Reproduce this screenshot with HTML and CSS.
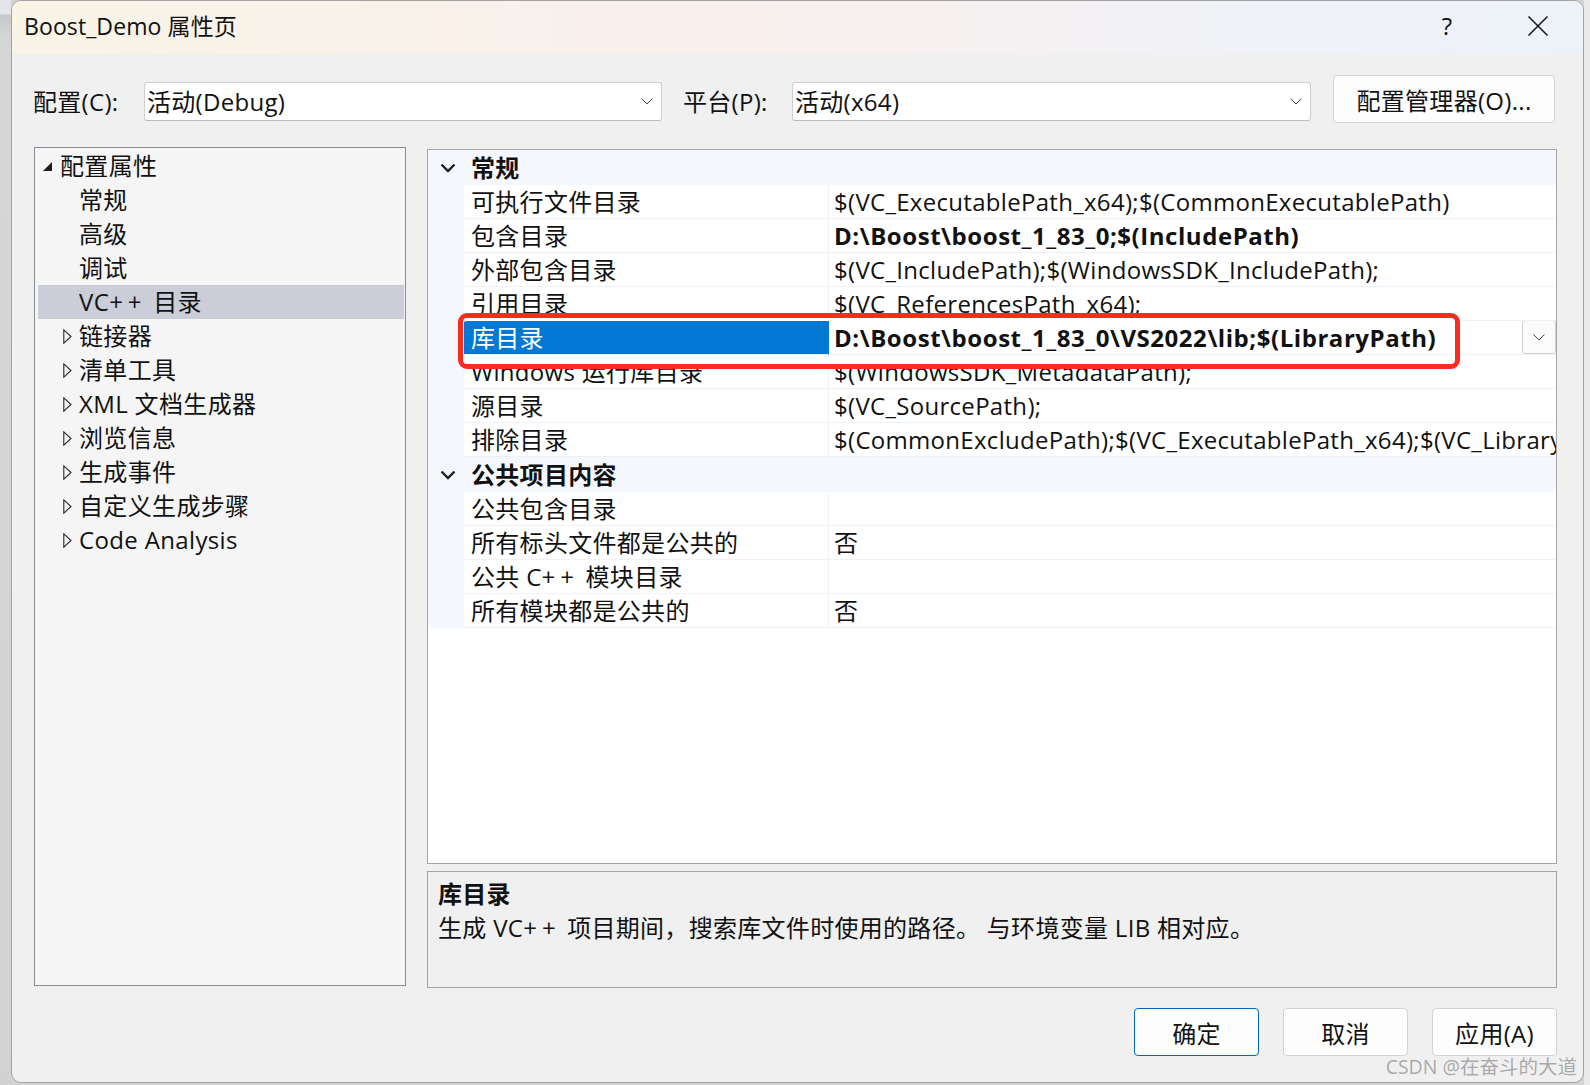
FILE: index.html
```html
<!DOCTYPE html>
<html lang="zh-CN">
<head>
<meta charset="utf-8">
<title>Boost_Demo 属性页</title>
<link rel="stylesheet" href="styles.css">
</head>
<body>
<div class="screen">
  <div class="side-left"></div>
  <div class="dialog">
    <div class="titlebar">
      <span class="title">Boost_Demo 属性页</span>
      <span class="help">?</span>
      <svg class="close" width="22" height="22" viewBox="0 0 22 22"><path d="M1.5 1.5 L20.5 20.5 M20.5 1.5 L1.5 20.5" stroke="#1a1a1a" stroke-width="1.6" fill="none"/></svg>
    </div>
    <div class="content">
      <div class="toolbar">
        <span class="label label-config">配置(C):</span>
        <div class="combo combo-config"><span>活动(Debug)</span><svg width="12" height="7" viewBox="0 0 12 7"><path d="M0.5 0.5 L6 6 L11.5 0.5" stroke="#444" stroke-width="1" fill="none"/></svg></div>
        <span class="label label-platform">平台(P):</span>
        <div class="combo combo-platform"><span>活动(x64)</span><svg width="12" height="7" viewBox="0 0 12 7"><path d="M0.5 0.5 L6 6 L11.5 0.5" stroke="#444" stroke-width="1" fill="none"/></svg></div>
        <div class="btn btn-manager">配置管理器(O)...</div>
      </div>
      <div class="main">
        <div class="tree">
          <div class="node lvl1"><span class="ico"><svg width="9" height="9" viewBox="0 0 9 9"><polygon points="9,0 9,9 0,9" fill="#1e1e1e"/></svg></span><span>配置属性</span></div>
          <div class="node lvl2"><span class="ico"></span><span>常规</span></div>
          <div class="node lvl2"><span class="ico"></span><span>高级</span></div>
          <div class="node lvl2"><span class="ico"></span><span>调试</span></div>
          <div class="node lvl2 selected"><span class="ico"></span><span>VC<span class="pp">++</span> 目录</span></div>
          <div class="node lvl2"><span class="ico"><svg width="9" height="15" viewBox="0 0 9 15"><polygon points="0.8,0.8 8,7.5 0.8,14.2" fill="none" stroke="#2a2a2a" stroke-width="1.1"/></svg></span><span>链接器</span></div>
          <div class="node lvl2"><span class="ico"><svg width="9" height="15" viewBox="0 0 9 15"><polygon points="0.8,0.8 8,7.5 0.8,14.2" fill="none" stroke="#2a2a2a" stroke-width="1.1"/></svg></span><span>清单工具</span></div>
          <div class="node lvl2"><span class="ico"><svg width="9" height="15" viewBox="0 0 9 15"><polygon points="0.8,0.8 8,7.5 0.8,14.2" fill="none" stroke="#2a2a2a" stroke-width="1.1"/></svg></span><span>XML 文档生成器</span></div>
          <div class="node lvl2"><span class="ico"><svg width="9" height="15" viewBox="0 0 9 15"><polygon points="0.8,0.8 8,7.5 0.8,14.2" fill="none" stroke="#2a2a2a" stroke-width="1.1"/></svg></span><span>浏览信息</span></div>
          <div class="node lvl2"><span class="ico"><svg width="9" height="15" viewBox="0 0 9 15"><polygon points="0.8,0.8 8,7.5 0.8,14.2" fill="none" stroke="#2a2a2a" stroke-width="1.1"/></svg></span><span>生成事件</span></div>
          <div class="node lvl2"><span class="ico"><svg width="9" height="15" viewBox="0 0 9 15"><polygon points="0.8,0.8 8,7.5 0.8,14.2" fill="none" stroke="#2a2a2a" stroke-width="1.1"/></svg></span><span>自定义生成步骤</span></div>
          <div class="node lvl2"><span class="ico"><svg width="9" height="15" viewBox="0 0 9 15"><polygon points="0.8,0.8 8,7.5 0.8,14.2" fill="none" stroke="#2a2a2a" stroke-width="1.1"/></svg></span><span>Code Analysis</span></div>
        </div>
        <div class="right">
          <div class="grid">
            <div class="section"><span class="chev"><svg width="16" height="10" viewBox="0 0 16 10"><path d="M1.5 1.5 L8 8 L14.5 1.5" stroke="#1e1e1e" stroke-width="2.4" fill="none"/></svg></span><span>常规</span></div>
            <div class="prop"><div class="gutter"></div><div class="name">可执行文件目录</div><div class="value">$(VC_ExecutablePath_x64);$(CommonExecutablePath)</div></div>
            <div class="prop"><div class="gutter"></div><div class="name">包含目录</div><div class="value bold">D:\Boost\boost_1_83_0;$(IncludePath)</div></div>
            <div class="prop"><div class="gutter"></div><div class="name">外部包含目录</div><div class="value">$(VC_IncludePath);$(WindowsSDK_IncludePath);</div></div>
            <div class="prop"><div class="gutter"></div><div class="name">引用目录</div><div class="value">$(VC_ReferencesPath_x64);</div></div>
            <div class="prop sel"><div class="gutter"></div><div class="name">库目录</div><div class="value bold">D:\Boost\boost_1_83_0\VS2022\lib;$(LibraryPath)<span class="dd"><svg width="12" height="7" viewBox="0 0 12 7"><path d="M0.5 0.5 L6 6 L11.5 0.5" stroke="#444" stroke-width="1" fill="none"/></svg></span></div></div>
            <div class="prop"><div class="gutter"></div><div class="name">Windows 运行库目录</div><div class="value">$(WindowsSDK_MetadataPath);</div></div>
            <div class="prop"><div class="gutter"></div><div class="name">源目录</div><div class="value">$(VC_SourcePath);</div></div>
            <div class="prop"><div class="gutter"></div><div class="name">排除目录</div><div class="value">$(CommonExcludePath);$(VC_ExecutablePath_x64);$(VC_Library</div></div>
            <div class="section"><span class="chev"><svg width="16" height="10" viewBox="0 0 16 10"><path d="M1.5 1.5 L8 8 L14.5 1.5" stroke="#1e1e1e" stroke-width="2.4" fill="none"/></svg></span><span>公共项目内容</span></div>
            <div class="prop"><div class="gutter"></div><div class="name">公共包含目录</div><div class="value"></div></div>
            <div class="prop"><div class="gutter"></div><div class="name">所有标头文件都是公共的</div><div class="value">否</div></div>
            <div class="prop"><div class="gutter"></div><div class="name">公共 C<span class="pp">++</span> 模块目录</div><div class="value"></div></div>
            <div class="prop"><div class="gutter"></div><div class="name">所有模块都是公共的</div><div class="value">否</div></div>
            <div class="highlight"></div>
          </div>
          <div class="desc">
            <div class="desc-title">库目录</div>
            <div class="desc-text">生成 VC<span class="pp">++</span> 项目期间，搜索库文件时使用的路径。 与环境变量 LIB 相对应。</div>
          </div>
        </div>
      </div>
      <div class="buttons">
        <div class="btn btn-dlg btn-ok">确定</div>
        <div class="btn btn-dlg">取消</div>
        <div class="btn btn-dlg">应用(A)</div>
      </div>
    </div>
    <div class="watermark">CSDN @在奋斗的大道</div>
  </div>
  <div class="side-right"></div>
</div>
</body>
</html>
```
FILE: styles.css
```css
* { box-sizing: border-box; }
html, body { margin: 0; padding: 0; }
body {
  width: 1590px;
  height: 1085px;
  overflow: hidden;
  font-family: "Open Sans", "Noto Sans CJK SC", sans-serif;
  font-size: 24px;
  color: #111;
  background: #d3d3d3;
}
.screen { display: flex; width: 1590px; height: 1085px; }
.side-left {
  width: 11px;
  flex: none;
  background: linear-gradient(180deg, #e4e4ea 0, #e4e4ea 14px, #c9c9cc 15px, #d6d6d6 40px, #d2d2d2 100%);
}
.side-right {
  flex: 1;
  background: #e9e9e9;
}
.dialog {
  position: relative;
  width: 1573px;
  height: 1083px;
  flex: none;
  background: #f0f0f0;
  border: 1px solid #a3a3a3;
  border-radius: 10px;
  overflow: hidden;
  display: flex;
  flex-direction: column;
}
.titlebar {
  height: 53px;
  flex: none;
  display: flex;
  align-items: center;
  padding-left: 12px;
  background: linear-gradient(90deg, #f8f4e6 0%, #f9f0ec 40%, #f8f0ef 55%, #f0f2f7 78%, #edf2f9 100%);
}
.title { font-size: 23px; color: #111; line-height: 30px; margin-top: -3px; letter-spacing: 0.1px; }
.help { margin-left: auto; font-size: 24px; font-weight: 400; margin-right: 75px; margin-top: -4px; color: #111; }
.close { margin-right: 34px; margin-top: -4px; }
.content {
  flex: 1;
  display: flex;
  flex-direction: column;
  padding: 0 26px 0 22px;
}
.toolbar {
  display: flex;
  align-items: flex-start;
  margin-top: 21px;
  height: 48px;
}
.label { line-height: 40px; margin-top: 7px; white-space: nowrap; letter-spacing: 0.3px; }
.label-config { width: 111px; margin-left: -1px; }
.label-platform { width: 109px; margin-left: 21px; }
.combo {
  margin-top: 7px;
  height: 39px;
  background: #fff;
  border: 1px solid #cfcfcf;
  border-bottom-color: #bdbdbd;
  border-radius: 3px;
  display: flex;
  align-items: center;
  justify-content: space-between;
  padding: 0 8px 0 2px;
  line-height: 36px;
  letter-spacing: 0.3px;
}
.combo-config { width: 518px; }
.combo-platform { width: 519px; }
.btn {
  background: #fdfdfd;
  border: 1px solid #d3d3d3;
  border-radius: 4px;
  display: flex;
  align-items: center;
  justify-content: center;
  letter-spacing: 0.3px;
}
.btn-manager { width: 222px; height: 48px; margin-left: 22px; }
.pp { letter-spacing: 5px; }
.main {
  display: flex;
  margin-top: 24px;
  height: 841px;
}
.tree {
  width: 372px;
  height: 839px;
  flex: none;
  background: #f5f5f5;
  border: 1px solid #858b94;
  padding-top: 1px;
  letter-spacing: 0.35px;
}
.node {
  height: 34px;
  display: flex;
  align-items: center;
  line-height: 34px;
  white-space: nowrap;
}
.node .ico { display: flex; align-items: center; }
.lvl1 { padding-left: 8px; }
.lvl1 .ico { width: 17px; }
.lvl2 { padding-left: 28px; }
.lvl2 .ico { width: 16px; }
.node.selected { background: #cbcdd9; margin: 0 1px 0 3px; padding-left: 25px; }
.right {
  margin-left: 21px;
  width: 1130px;
  padding-top: 2px;
  display: flex;
  flex-direction: column;
}
.grid {
  position: relative;
  height: 715px;
  background: #fff;
  border: 1px solid #a5a5a5;
  overflow: hidden;
  letter-spacing: 0.3px;
}
.section {
  height: 35px;
  display: flex;
  align-items: center;
  background: #f4f7fb;
  font-weight: 700;
  line-height: 35px;
}
.section .chev { width: 43px; padding-left: 12px; display: flex; align-items: center; }
.prop {
  height: 34px;
  display: flex;
  line-height: 33px;
  white-space: nowrap;
}
.gutter { width: 36px; flex: none; background: #f4f7fb; }
.name {
  width: 365px;
  flex: none;
  padding-left: 7px;
  border-bottom: 1px solid #eef1f5;
  border-right: 1px solid #eef1f5;
  overflow: hidden;
}
.value {
  position: relative;
  flex: 1;
  padding-left: 5px;
  border-bottom: 1px solid #eef1f5;
  overflow: hidden;
}
.bold { font-weight: 700; letter-spacing: 0.55px; }
.prop.sel .name { background: #0078d4; color: #fff; border-right-color: #0078d4; }
.dd {
  position: absolute;
  right: 0;
  top: -1px;
  width: 34px;
  height: 34px;
  background: #fbfbfb;
  border: 1px solid #cfcfcf;
  border-radius: 3px;
  display: flex;
  align-items: center;
  justify-content: center;
}
.highlight {
  position: absolute;
  left: 30px;
  top: 163px;
  width: 1002px;
  height: 56px;
  border: 5px solid #fb2b20;
  border-radius: 9px;
  box-shadow: inset 0 3px 0 #fff, inset 0 -9px 0 #fff;
}
.desc {
  margin-top: 7px;
  height: 117px;
  background: #f0f0f0;
  border: 1px solid #a5a5a5;
  padding: 5px 10px;
  line-height: 34px;
  letter-spacing: 0.3px;
}
.desc-title { font-weight: 700; }
.gap { display: inline-block; width: 8px; }
.buttons {
  display: flex;
  justify-content: flex-end;
  gap: 24px;
  margin-top: 20px;
}
.btn-dlg { width: 125px; height: 48px; }
.btn-ok { border-color: #0067c0; }
.watermark {
  position: absolute;
  right: 6px;
  top: 1052px;
  font-size: 19.5px;
  line-height: 28px;
  color: rgba(120, 120, 120, 0.6);
  white-space: nowrap;
}
```
